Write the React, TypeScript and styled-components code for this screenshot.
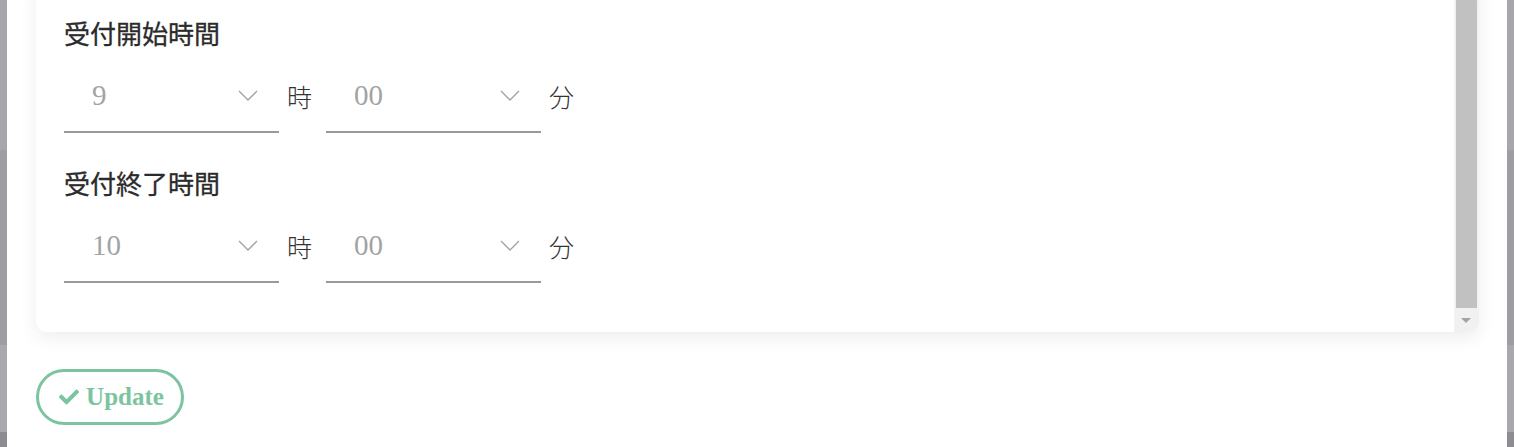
import styled, { createGlobalStyle } from 'styled-components';
import { FaCheck } from 'react-icons/fa';

const GlobalStyle = createGlobalStyle`
  html, body {
    margin: 0;
    height: 447px;
    overflow: hidden;
  }
  body {
    background: linear-gradient(
      to bottom,
      #a7a7ab 0px,
      #a7a7ab 150px,
      #9e9ea2 150px,
      #9e9ea2 345px,
      #a9a9ad 345px,
      #a9a9ad 432px,
      #8d8d91 432px
    );
  }
`;

interface TimeRangeProps {
  label: string;
  hour: string;
  minute: string;
}

function Chevron() {
  return (
    <svg width="20" height="11" viewBox="0 0 20 11" fill="none">
      <polyline points="1,1 10,10 19,1" stroke="#a0a0a0" strokeWidth="1.3" />
    </svg>
  );
}

function TimeField({ label, hour, minute }: TimeRangeProps) {
  return (
    <FieldGroup>
      <FieldLabel>{label}</FieldLabel>
      <SelectRow>
        <Select>
          <SelectValue>{hour}</SelectValue>
          <Chevron />
        </Select>
        <Unit>時</Unit>
        <Select>
          <SelectValue>{minute}</SelectValue>
          <Chevron />
        </Select>
        <Unit>分</Unit>
      </SelectRow>
    </FieldGroup>
  );
}

export default function App() {
  return (
    <>
      <GlobalStyle />
      <Modal>
        <Card>
          <CardBody>
            <TimeField label="受付開始時間" hour="9" minute="00" />
            <TimeField label="受付終了時間" hour="10" minute="00" />
          </CardBody>
          <ScrollTrack>
            <ScrollThumb />
            <ScrollArrow />
          </ScrollTrack>
        </Card>
        <UpdateButton>
          <FaCheck size={20} />
          Update
        </UpdateButton>
      </Modal>
    </>
  );
}

const Modal = styled.div`
  margin: 0 7px;
  height: 447px;
  background: #fff;
  padding: 0 28px 0 29px;
  box-sizing: border-box;
  display: flex;
  flex-direction: column;
  align-items: flex-start;
`;

const Card = styled.div`
  align-self: stretch;
  margin-top: -20px;
  height: 352px;
  display: flex;
  background: #fff;
  border-radius: 10px;
  box-shadow: 0 6px 18px rgba(0, 0, 0, 0.07);
  overflow: hidden;
`;

const CardBody = styled.div`
  flex: 1;
  padding: 33px 0 0 28px;
  display: flex;
  flex-direction: column;
  gap: 30px;
`;

const FieldGroup = styled.div`
  display: flex;
  flex-direction: column;
  gap: 8px;
`;

const FieldLabel = styled.div`
  font-family: 'Noto Sans CJK JP', sans-serif;
  font-size: 26px;
  font-weight: 400;
  line-height: 39px;
  color: #2b2b2b;
  -webkit-text-stroke: 0.3px #2b2b2b;
`;

const SelectRow = styled.div`
  display: flex;
  align-items: center;
`;

const Select = styled.div`
  width: 215px;
  height: 73px;
  box-sizing: border-box;
  border-bottom: 2px solid #999;
  padding: 0 21px 0 28px;
  display: flex;
  align-items: center;
  justify-content: space-between;
`;

const SelectValue = styled.span`
  font-family: 'Liberation Serif', serif;
  font-size: 29px;
  color: #a3a3a3;
`;

const Unit = styled.span`
  font-family: 'Noto Sans CJK JP', serif;
  font-weight: 300;
  font-size: 25px;
  color: #333;
  padding: 0 14px 0 8px;
  margin-top: -2px;
`;

const ScrollTrack = styled.div`
  width: 25px;
  background: #f1f1f1;
  display: flex;
  flex-direction: column;
  align-items: center;
`;

const ScrollThumb = styled.div`
  flex: 1;
  width: 21px;
  background: #c1c1c1;
`;

const ScrollArrow = styled.div`
  height: 24px;
  width: 25px;
  position: relative;
  &::after {
    content: '';
    position: absolute;
    left: 7px;
    top: 10px;
    border-left: 5px solid transparent;
    border-right: 5px solid transparent;
    border-top: 5px solid #a3a3a3;
  }
`;

const UpdateButton = styled.button`
  margin-top: 37px;
  width: 148px;
  height: 56px;
  box-sizing: border-box;
  border: 3px solid #7cc4a0;
  border-radius: 28px;
  background: #fff;
  color: #7cc4a0;
  font-family: 'Liberation Serif', serif;
  font-weight: 700;
  font-size: 25px;
  display: flex;
  align-items: center;
  justify-content: center;
  gap: 7px;
  padding: 0 0 0 3px;
  cursor: pointer;
`;
